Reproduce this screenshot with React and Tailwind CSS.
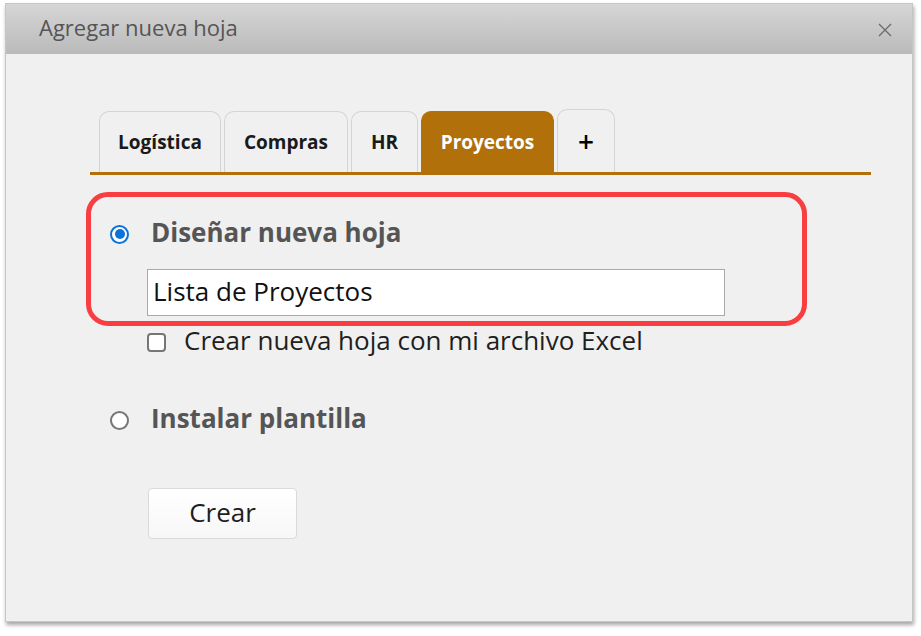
import React from "react";

const font = { fontFamily: '"Open Sans", "Liberation Sans", sans-serif' };

function Tab({ label, active, className }) {
    return (
        <div
            className={
                "flex items-center justify-center h-[61px] rounded-t-[10px] text-[19px] font-bold " +
                (active
                    ? "bg-[#b1700a] text-white border border-[#b1700a] border-b-0"
                    : "bg-[#f0f0f0] text-[#1a1a1a] border border-[#d4d4d4] border-b-0") +
                " " + className
            }
        >
            {label}
        </div>
    );
}

function Radio({ checked }) {
    if (checked) {
        return (
            <div className="w-[19px] h-[19px] rounded-full border-2 border-[#0b72dc] bg-white flex items-center justify-center shrink-0">
                <div className="w-[10px] h-[10px] rounded-full bg-[#0b72dc]"></div>
            </div>
        );
    }
    return <div className="w-[19px] h-[19px] rounded-full border-2 border-[#767676] bg-white shrink-0"></div>;
}

export default function App() {
    return (
        <div className="w-[921px] h-[636px] bg-white pt-[3px] pl-[5px]" style={font}>
            <div className="w-[908px] h-[619px] flex flex-col bg-[#f0f0f0] border border-[#c6c6c6] shadow-[1px_3px_4px_rgba(0,0,0,0.35)]">
                {/* header */}
                <div className="h-[50px] flex items-center justify-between pl-[33px] pr-[20px] pb-[4px] bg-gradient-to-b from-[#d6d6d6] to-[#bababa]">
                    <p className="text-[22px] text-[#555555]">Agregar nueva hoja</p>
                    <svg width="14" height="14" viewBox="0 0 14 14" className="mt-[6px]">
                        <path d="M1 1 L13 13 M13 1 L1 13" stroke="#6a6a6a" strokeWidth="1.3" fill="none" />
                    </svg>
                </div>

                {/* body */}
                <div className="flex flex-col pl-[80px]">
                    <div className="ml-[4px] mt-[55px] w-[781px] flex items-end gap-[3px] pl-[9px] border-b-[3px] border-[#b1700a]">
                        <Tab label="Logística" className="w-[122px]" />
                        <Tab label="Compras" className="w-[124px]" />
                        <Tab label="HR" className="w-[67px]" />
                        <Tab label="Proyectos" active className="w-[133px]" />
                        <Tab label={<span className="text-[28px] font-semibold text-black">+</span>} className="w-[58px] h-[63px]" />
                    </div>

                    <div className="mt-[17px] w-[721px] h-[134px] border-[5px] border-[#f83e40] rounded-[22px] pl-[19px] pt-[20px] flex flex-col">
                        <div className="flex items-center h-[34px] gap-[22px]">
                            <Radio checked />
                            <p className="text-[26px] font-bold text-[#555555] leading-none pb-[4px]">Diseñar nueva hoja</p>
                        </div>
                        <div className="ml-[37px] mt-[18px] w-[578px] h-[47px] bg-white border border-[#a9a9a9] flex items-center pl-[5px] pb-[2px]">
                            <span className="text-[26px] text-[#111111]">Lista de Proyectos</span>
                        </div>
                    </div>

                    <div className="ml-[61px] h-[34px] flex items-center gap-[18px]">
                        <div className="w-[19px] h-[19px] rounded-[4px] border-2 border-[#767676] bg-white mb-[2px]"></div>
                        <p className="text-[26px] text-[#1e1e1e] leading-none pb-[6px]">Crear nueva hoja con mi archivo Excel</p>
                    </div>

                    <div className="ml-[24px] mt-[43px] flex items-center h-[34px] gap-[22px]">
                        <Radio />
                        <p className="text-[26px] font-bold text-[#555555] leading-none pb-[4px]">Instalar plantilla</p>
                    </div>

                    <button className="ml-[62px] mt-[51px] w-[149px] h-[51px] rounded-[4px] border border-[#dadada] bg-gradient-to-b from-white to-[#f7f7f7] text-[26px] text-[#1e1e1e] pb-[2px]">
                        Crear
                    </button>
                </div>
            </div>
        </div>
    );
}
